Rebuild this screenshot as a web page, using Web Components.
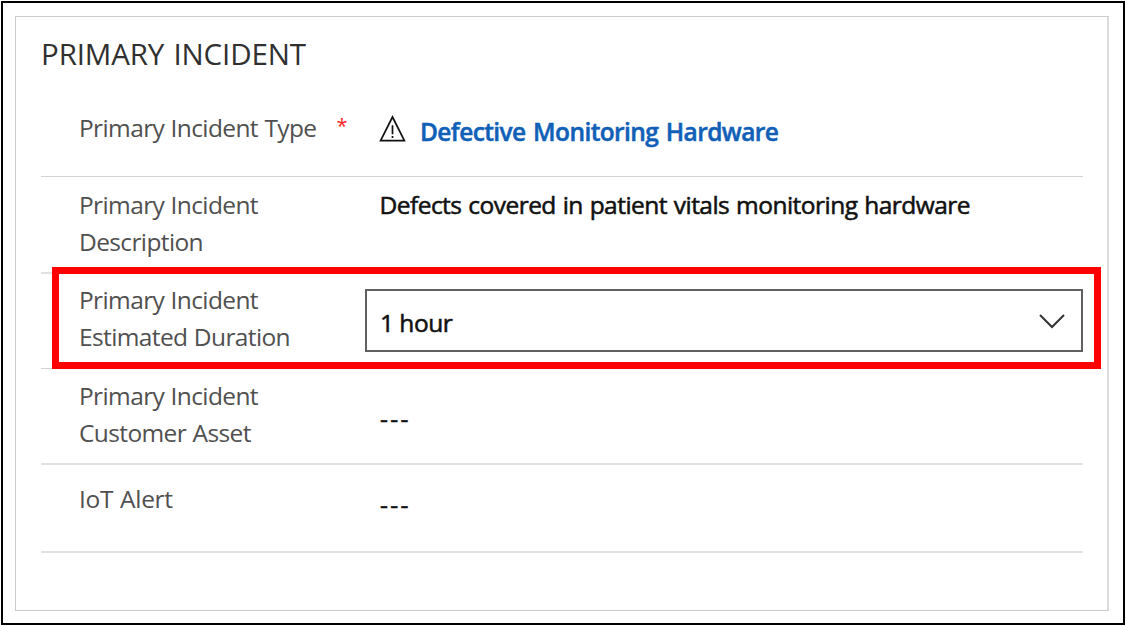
<!DOCTYPE html>
<html lang="en">
<head>
<meta charset="utf-8">
<title>Primary Incident</title>
<style>
html,body{margin:0;height:100%;background:#fff}
body{font-family:"Open Sans","Noto Sans",sans-serif;overflow:hidden}
</style>
</head>
<body>
<incident-frame>
  <form-section>
    <span slot="title">PRIMARY INCIDENT</span>
    <form-row style="--h:88px;--pt:20px;--line:1px;--line-color:#d2d2d2">
      <field-label slot="label" required>Primary Incident Type</field-label>
      <lookup-value style="--vt:24px">Defective Monitoring Hardware</lookup-value>
    </form-row>
    <form-row style="--h:97px;--pt:9px">
      <field-label slot="label">Primary Incident<br>Description</field-label>
      <text-value style="--vt:9px">Defects covered in patient vitals monitoring hardware</text-value>
    </form-row>
    <form-row highlighted style="--h:95px;--pt:7px;--line:1px;--line-color:#d2d2d2">
      <field-label slot="label">Primary Incident<br>Estimated Duration</field-label>
      <duration-select>1 hour</duration-select>
    </form-row>
    <form-row style="--h:96px;--pt:8px">
      <field-label slot="label">Primary Incident<br>Customer Asset</field-label>
      <text-value style="--vt:31px;--vls:2.4px;--vl:15px">---</text-value>
    </form-row>
    <form-row style="--h:88px;--pt:15px">
      <field-label slot="label" style="--s1:-.28px">IoT Alert</field-label>
      <text-value style="--vt:21px;--vls:2.4px;--vl:15px">---</text-value>
    </form-row>
  </form-section>
</incident-frame>
<script>
const define = (name, html) => customElements.define(name, class extends HTMLElement {
  constructor() {
    super();
    this.attachShadow({mode: 'open'}).innerHTML = html;
  }
});

define('incident-frame', `<style>
:host{display:block;box-sizing:border-box;width:1126px;height:626px;padding:1px}
.frame{box-sizing:border-box;width:1124px;height:624px;border:2px solid #000;padding:13px 14px 12px 12px}
</style><div class="frame"><slot></slot></div>`);

define('form-section', `<style>
:host{display:flex;flex-direction:column;box-sizing:border-box;height:595px;width:1094px;border:1px solid #cbcbcb;border-right:2px solid #dcdcdc;padding:0 25px}
h2{margin:0;height:72px;box-sizing:border-box;padding-top:15px;font-size:29.5px;line-height:44px;font-weight:400;color:#303030;letter-spacing:-.12px;word-spacing:1.6px;white-space:nowrap}
</style><h2><slot name="title"></slot></h2><slot></slot>`);

define('form-row', `<style>
:host{display:grid;grid-template-columns:324px 718px;position:relative;box-sizing:border-box;height:var(--h);border-bottom:var(--line,2px) solid var(--line-color,#e2e2e2);width:1042px}
.label{padding:var(--pt) 0 0 38px}
.mark{display:none}
:host([highlighted]) .mark{display:block;position:absolute;left:11px;top:-7px;width:1035px;height:88px;border:7px solid #f00;pointer-events:none}
</style><div class="label"><slot name="label"></slot></div><div><slot></slot></div><div class="mark"></div>`);

define('field-label', `<style>
:host{display:flex;font-size:24.5px;line-height:37px;color:#505050;white-space:nowrap;letter-spacing:var(--s1,-.62px);word-spacing:.7px}
i{display:none;font-style:normal;color:#f22;margin-left:20px;font-size:20px;line-height:34px}
:host([required]) i{display:block}
</style><span><slot></slot></span><i>*</i>`);

define('lookup-value', `<style>
:host{display:flex;padding:var(--vt) 0 0 14px;font-size:24.5px;line-height:37px;font-weight:600;color:#1160b7;-webkit-text-stroke:.5px #1160b7;white-space:nowrap;letter-spacing:-.6px;word-spacing:1.8px}
svg{flex:none;width:28px;height:29px;margin:2px 13px 0 0}
</style><svg viewBox="0 0 28 29" fill="none" stroke="#111" stroke-width="1.7"><path d="M13.5 2 25.4 25.6H1.6Z"/><path d="M13.5 10.3v9M13.5 21v2"/></svg><span><slot></slot></span>`);

define('text-value', `<style>
:host{display:block;padding:var(--vt) 0 0 var(--vl,14.5px);font-size:24.5px;line-height:37px;color:#111;-webkit-text-stroke:.55px #111;white-space:nowrap;letter-spacing:var(--vls,-.53px);word-spacing:1px}
</style><slot></slot>`);

define('duration-select', `<style>
:host{display:flex;align-items:center;justify-content:space-between;box-sizing:border-box;width:718px;height:63px;margin-top:15px;border:2px solid #606060;padding:4px 15px 0 13px;font-size:24.5px;line-height:37px;color:#111;-webkit-text-stroke:.55px #111;letter-spacing:-.5px;background:#fff}
svg{width:28px;height:18px;margin-top:-3px}
</style><span><slot></slot></span><svg viewBox="0 0 28 18" fill="none" stroke="#333" stroke-width="2"><path d="M2 3 14 15 26 3"/></svg>`);
</script>
</body>
</html>
